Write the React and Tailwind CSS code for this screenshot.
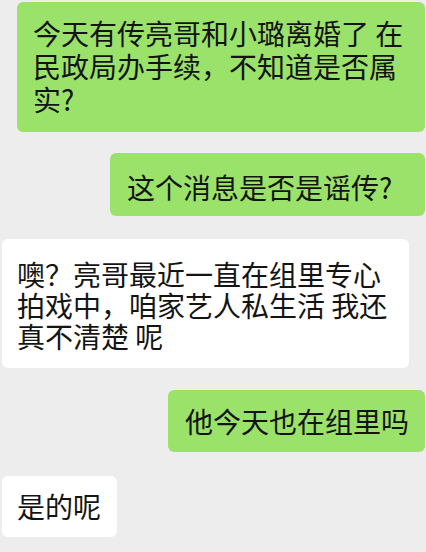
import React from 'react';

const font = { fontFamily: '"Noto Sans CJK SC", "Noto Sans", sans-serif' };

const messages = [
  {
    side: 'right',
    lines: ['今天有传亮哥和小璐离婚了 在', '民政局办手续，不知道是否属', '实?'],
    box: 'ml-[17px] mr-[1px] mt-[2px] pl-[16px] pt-[15px] pb-[16px] leading-[33px]',
  },
  {
    side: 'right',
    lines: ['这个消息是否是谣传?'],
    box: 'ml-[110px] mr-[1px] mt-[21px] pl-[17px] pt-[18px] pb-[12px] leading-[33px]',
  },
  {
    side: 'left',
    lines: ['噢？亮哥最近一直在组里专心', '拍戏中，咱家艺人私生活 我还', '真不清楚 呢'],
    box: 'ml-[2px] w-[407px] mt-[23px] pl-[15px] pt-[20px] pb-[16px] leading-[31px]',
  },
  {
    side: 'right',
    lines: ['他今天也在组里吗'],
    box: 'ml-[168px] mr-[1px] mt-[22px] pl-[17px] pt-[15px] pb-[14px] leading-[33px]',
  },
  {
    side: 'left',
    lines: ['是的呢'],
    box: 'ml-[2px] w-[115px] mt-[24px] pl-[15px] pt-[14px] pb-[14px] leading-[33px]',
  },
];

const Bubble = ({ side, lines, box }) => {
  const colour = side === 'right' ? 'bg-[#9be26a]' : 'bg-white';
  return (
    <div className={`${box} ${colour} rounded-[6px] text-[28px] text-[#141414] whitespace-nowrap`}>
      {lines.map((line, i) => (
        <div key={i}>{line}</div>
      ))}
    </div>
  );
};

export default function App() {
  return (
    <div className="w-[426px] h-[552px] overflow-hidden bg-[#ededed] flex flex-col" style={font}>
      {messages.map((m, i) => (
        <Bubble key={i} {...m} />
      ))}
    </div>
  );
}
